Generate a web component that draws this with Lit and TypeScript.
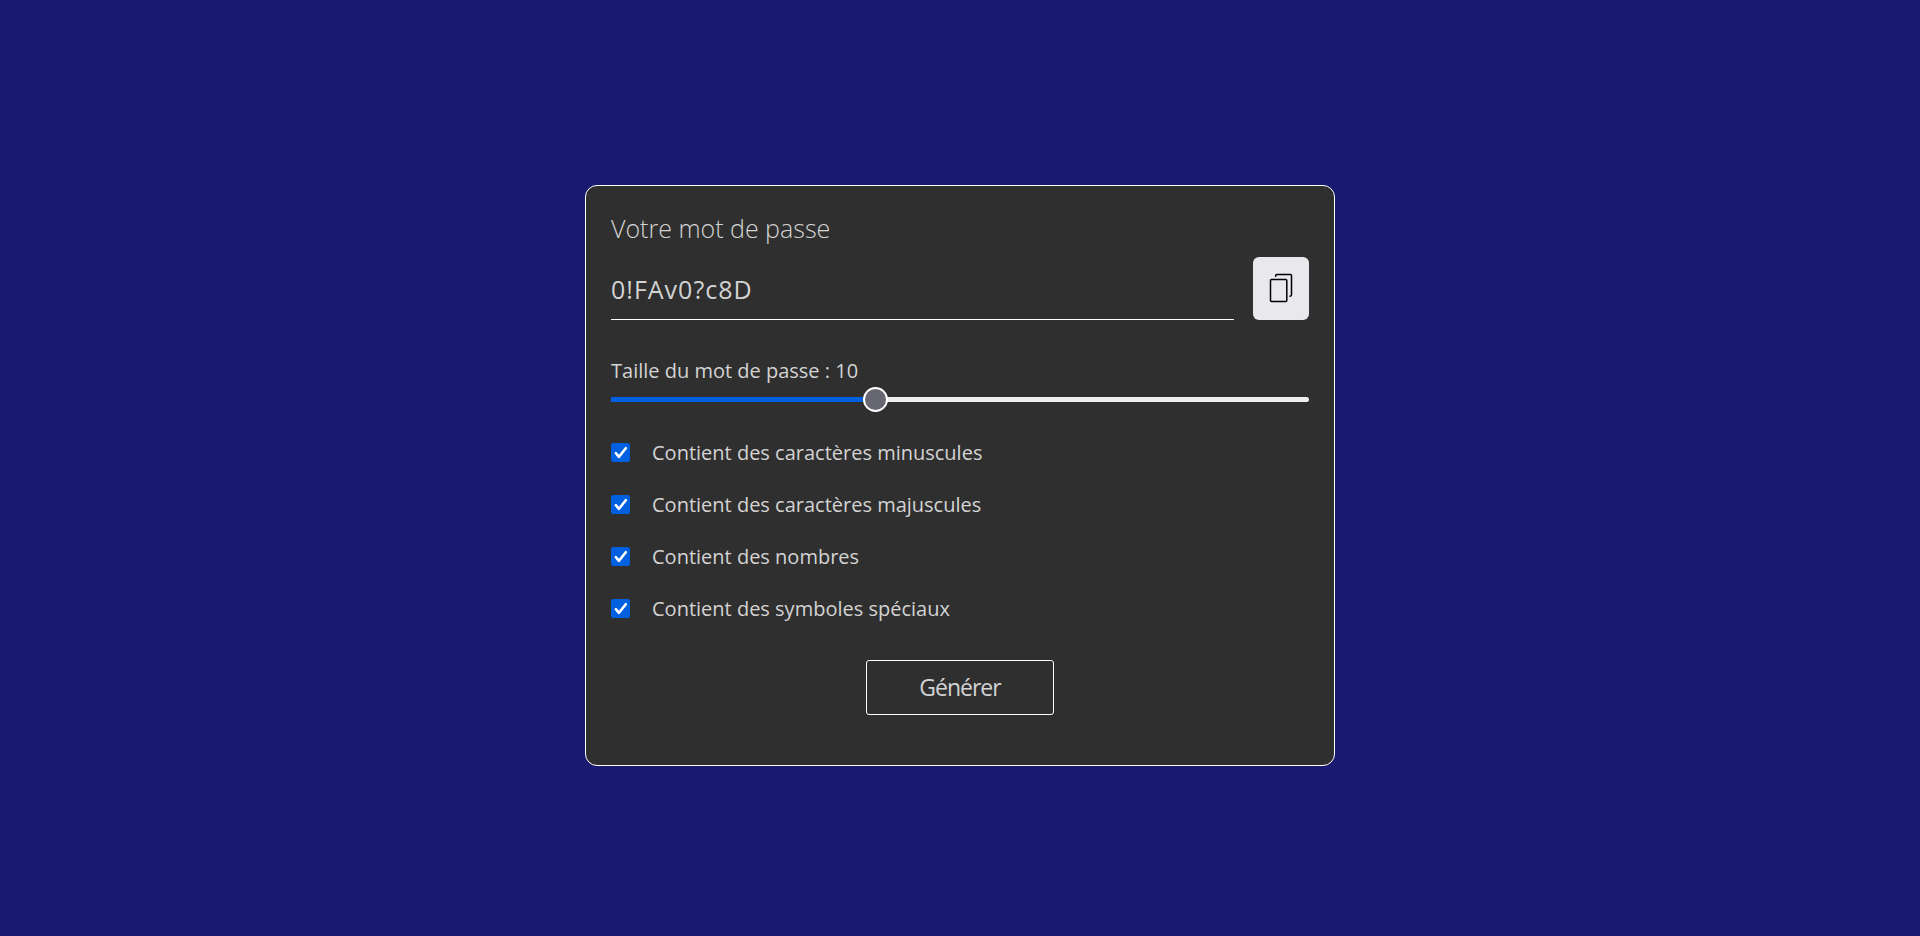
import { LitElement, html, css } from "lit";
import { customElement, state } from "lit/decorators.js";

const MIN = 4;
const MAX = 20;

const OPTIONS = [
  { id: "lower", label: "Contient des caractères minuscules", chars: "abcdefghijklmnopqrstuvwxyz" },
  { id: "upper", label: "Contient des caractères majuscules", chars: "ABCDEFGHIJKLMNOPQRSTUVWXYZ" },
  { id: "digits", label: "Contient des nombres", chars: "0123456789" },
  { id: "symbols", label: "Contient des symboles spéciaux", chars: "!@#$%^&*()?" },
];

@customElement("app-root")
export class AppRoot extends LitElement {
  @state() private password = "0!FAv0?c8D";
  @state() private size = 10;
  @state() private enabled = new Set(OPTIONS.map((o) => o.id));

  static styles = css`
    :host {
      display: flex;
      align-items: center;
      justify-content: center;
      min-height: 100vh;
      box-sizing: border-box;
      padding: 16px;
      background: #191970;
      color: #d3d3d3;
      font-family: "Open Sans", "Noto Sans", sans-serif;
      font-size: 20px;
    }
    * {
      box-sizing: border-box;
    }
    .card {
      display: flex;
      flex-direction: column;
      width: 100%;
      max-width: 750px;
      margin-top: 15px;
      padding: 25px 25px 50px;
      background: #2f2f2f;
      border: 1px solid #fff;
      border-radius: 12px;
    }
    .title {
      font-size: 25px;
      font-weight: 300;
      line-height: 34px;
    }
    .result {
      display: flex;
      gap: 19px;
      margin-top: 12px;
    }
    .password {
      flex: 1;
      min-width: 0;
      height: 63px;
      padding: 2px 0 0;
      border: 0;
      border-bottom: 1px solid #fff;
      outline: none;
      background: transparent;
      color: inherit;
      font: inherit;
      font-size: 25px;
      letter-spacing: 1px;
    }
    .copy {
      display: grid;
      place-items: center;
      width: 56px;
      height: 63px;
      padding: 0;
      border: 0;
      border-radius: 6px;
      background: #e9e9ed;
      color: #000;
      cursor: pointer;
    }
    .icon {
      width: 28px;
      height: 33px;
      fill: none;
      stroke: currentColor;
      stroke-width: 1.5;
      stroke-linecap: round;
      stroke-linejoin: round;
    }
    .size-label {
      margin-top: 37px;
      line-height: 28px;
    }
    .slider {
      appearance: none;
      width: 100%;
      height: 5px;
      margin: 12px 0 0;
      border-radius: 0 5px 5px 0;
      background: linear-gradient(#0060df, #0060df) no-repeat #efefef;
      cursor: pointer;
    }
    .slider::-webkit-slider-thumb {
      appearance: none;
      width: 25px;
      height: 25px;
      border: 2px solid #fff;
      border-radius: 50%;
      background: #676774;
    }
    .options {
      display: grid;
      gap: 24px;
      margin-top: 37px;
    }
    .option {
      display: flex;
      align-items: center;
      gap: 22px;
      line-height: 28px;
    }
    .check {
      position: relative;
      display: flex;
      padding-bottom: 1px;
    }
    .box {
      appearance: none;
      width: 19px;
      height: 19px;
      margin: 0;
      border: 1px solid #8f8f9d;
      border-radius: 2px;
      background: #fff;
    }
    .box:checked {
      border-color: #0060df;
      background: #0060df;
    }
    .tick {
      position: absolute;
      top: 0;
      left: 0;
      width: 19px;
      height: 19px;
      fill: none;
      stroke: #fff;
      stroke-width: 2.6;
      stroke-linecap: round;
      stroke-linejoin: round;
      pointer-events: none;
    }
    .box:not(:checked) + .tick {
      display: none;
    }
    .generate {
      align-self: center;
      width: 188px;
      height: 55px;
      margin-top: 37px;
      padding: 0 0 2px;
      border: 1px solid #fff;
      border-radius: 3px;
      background: transparent;
      color: inherit;
      font: inherit;
      font-size: 23px;
      letter-spacing: -1px;
      cursor: pointer;
    }
  `;

  private generate() {
    const pool = OPTIONS.filter((o) => this.enabled.has(o.id)).map((o) => o.chars).join("");
    if (!pool) return;
    this.password = Array.from({ length: this.size }, () => pool[Math.floor(Math.random() * pool.length)]).join("");
  }

  private toggle(id: string) {
    const next = new Set(this.enabled);
    if (!next.delete(id)) next.add(id);
    this.enabled = next;
  }

  render() {
    const fill = ((this.size - MIN) / (MAX - MIN)) * 100;
    return html`
      <main class="card">
        <label class="title" for="password">Votre mot de passe</label>
        <div class="result">
          <input class="password" id="password" type="text" readonly .value=${this.password} />
          <button class="copy" type="button" aria-label="Copier" @click=${() => navigator.clipboard?.writeText(this.password)}>
            <svg class="icon" viewBox="0 0 28 33" aria-hidden="true">
              <rect x="3.5" y="7.5" width="16.3" height="22" rx="1" />
              <path d="M8.7 4.3V3.5Q8.7 2.5 9.7 2.5H23.5Q24.5 2.5 24.5 3.5V22.8Q24.5 24.2 23 24.2" />
            </svg>
          </button>
        </div>
        <label class="size-label" for="size">Taille du mot de passe : ${this.size}</label>
        <input
          class="slider"
          id="size"
          type="range"
          min=${MIN}
          max=${MAX}
          .value=${String(this.size)}
          style="background-size: ${fill}% 100%"
          @input=${(e: Event) => (this.size = Number((e.target as HTMLInputElement).value))}
        />
        <div class="options">
          ${OPTIONS.map(
            (o) => html`
              <label class="option" for=${o.id}>
                <span class="check">
                  <input class="box" id=${o.id} type="checkbox" .checked=${this.enabled.has(o.id)} @change=${() => this.toggle(o.id)} />
                  <svg class="tick" viewBox="0 0 19 19" aria-hidden="true"><path d="M4.8 10.2L8 13.8L14.8 5.2" /></svg>
                </span>
                <span>${o.label}</span>
              </label>
            `
          )}
        </div>
        <button class="generate" type="button" @click=${this.generate}>Générer</button>
      </main>
    `;
  }
}
